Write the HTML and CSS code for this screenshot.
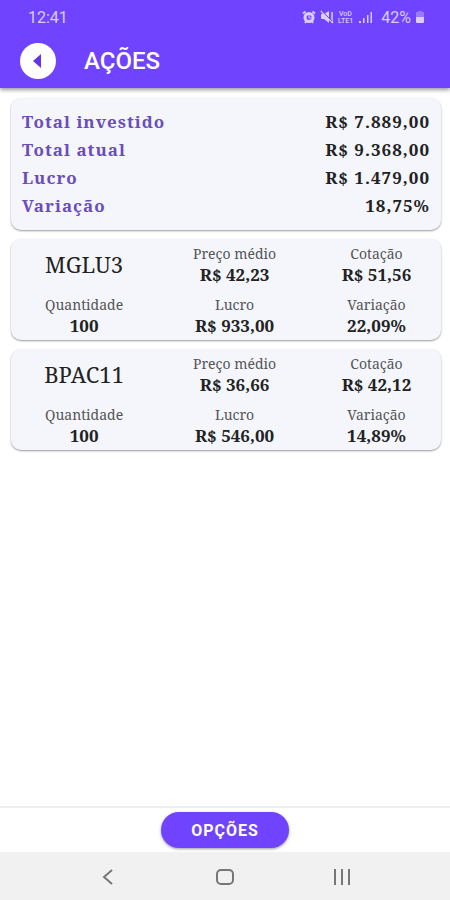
FILE: index.html
```html
<!DOCTYPE html>
<html lang="pt-BR">
<head>
  <meta charset="UTF-8" />
  <meta name="viewport" content="width=device-width, initial-scale=1" />
  <title>Ações</title>
  <link rel="stylesheet" href="styles.css">
</head>
<body>
  <header class="header">
    <div class="status-bar">
      <span>12:41</span>
      <div class="status-icons">
        <svg width="14" height="14" viewBox="0 0 14 14" fill="none" stroke="currentColor">
          <circle cx="7" cy="7.5" r="4" stroke-width="3" />
          <path d="M1 3.5 3.5 1.5M13 3.5 10.500 1.500M3 13l1.500-2M11 13 9.500 11" stroke-width="2" />
          <path d="M7 5v3h2" />
        </svg>
        <svg width="14" height="14" viewBox="0 0 14 14">
          <path d="M1 4h3l5-3v12L4 9H1z" fill="currentColor" />
          <path d="M1 1l12 12M12 2v10" fill="none" stroke="currentColor" stroke-width="1.500" />
          <path d="M2 1l10 10" stroke="#6f43ff" />
        </svg>
        <svg class="volte" width="17" height="14" viewBox="0 0 17 14">
          <text x="1" y="6">VoD</text>
          <text x="0" y="13">LTE1</text>
        </svg>
        <svg width="14" height="14" viewBox="0 0 14 14" fill="currentColor">
          <path d="M0 11h2v2H0zM4 8h1.500v5H4zM8 5h1.500v8H8zM11.500 2H13v11h-1.500z" />
        </svg>
        <span class="battery-level">42%</span>
        <svg width="10" height="14" viewBox="0 0 10 14" fill="currentColor">
          <path d="M3 1h4v1h2v5H1V2h2z" opacity=".4" />
          <path d="M1 7h8v5q0 1-1 1H2q-1 0-1-1z" />
        </svg>
      </div>
    </div>
    <div class="toolbar">
      <button class="back" aria-label="Voltar">
        <svg width="36" height="36" viewBox="0 0 36 36"><path d="M21 11v14l-8-7z" fill="#6236e0" /></svg>
      </button>
      <h1>AÇÕES</h1>
    </div>
  </header>

  <main class="content">
    <dl class="card summary">
      <div><dt>Total investido</dt><dd>R$ 7.889,00</dd></div>
      <div><dt>Total atual</dt><dd>R$ 9.368,00</dd></div>
      <div><dt>Lucro</dt><dd>R$ 1.479,00</dd></div>
      <div><dt>Variação</dt><dd>18,75%</dd></div>
    </dl>

    <section class="card stock">
      <h2>MGLU3</h2>
      <div><span>Preço médio</span><strong>R$ 42,23</strong></div>
      <div><span>Cotação</span><strong>R$ 51,56</strong></div>
      <div><span>Quantidade</span><strong>100</strong></div>
      <div><span>Lucro</span><strong>R$ 933,00</strong></div>
      <div><span>Variação</span><strong>22,09%</strong></div>
    </section>

    <section class="card stock">
      <h2>BPAC11</h2>
      <div><span>Preço médio</span><strong>R$ 36,66</strong></div>
      <div><span>Cotação</span><strong>R$ 42,12</strong></div>
      <div><span>Quantidade</span><strong>100</strong></div>
      <div><span>Lucro</span><strong>R$ 546,00</strong></div>
      <div><span>Variação</span><strong>14,89%</strong></div>
    </section>
  </main>

  <footer class="actions">
    <button class="options">OPÇÕES</button>
  </footer>

  <nav class="system-nav">
    <button aria-label="Voltar">
      <svg width="20" height="20" viewBox="0 0 20 20"><path d="M14 3 6 10l8 7" /></svg>
    </button>
    <button aria-label="Início">
      <svg width="20" height="20" viewBox="0 0 20 20"><rect x="2" y="3" width="16" height="14" rx="4" /></svg>
    </button>
    <button aria-label="Recentes">
      <svg width="20" height="20" viewBox="0 0 20 20"><path d="M3 2v16M10 2v16M17 2v16" /></svg>
    </button>
  </nav>
</body>
</html>
```

FILE: styles.css
```css
:root {
  --accent: #6f43ff;
  --card: #f4f6fb;
}
* {
  box-sizing: border-box;
}
body {
  margin: 0;
  min-height: 100vh;
  display: flex;
  flex-direction: column;
  background: #fff;
  color: #222;
  font-family: "Noto Serif", "DejaVu Serif", serif;
}
button {
  border: none;
  padding: 0;
  cursor: pointer;
}
svg {
  display: block;
}

.header {
  background: var(--accent);
  color: #fff;
  font-family: Roboto, sans-serif;
  box-shadow: 0 2px 4px rgba(0,0,0,0.4);
}
.status-bar {
  display: flex;
  justify-content: space-between;
  align-items: center;
  height: 34px;
  padding: 0 25px 0 28px;
  color: #d9ceff;
  font-size: 16px;
}
.status-icons {
  display: flex;
  align-items: center;
  gap: 4px;
}
.volte {
  fill: currentColor;
  font-size: 7px;
  font-weight: 500;
}
.battery-level {
  margin-left: 4px;
}
.toolbar {
  display: flex;
  align-items: center;
  gap: 28px;
  height: 54px;
  padding: 0 20px;
}
.back {
  width: 36px;
  height: 36px;
  border-radius: 50%;
  background: #fff;
}
h1 {
  margin: 0;
  font-size: 24px;
  font-weight: 500;
}

.content {
  flex: 1;
  display: flex;
  flex-direction: column;
  gap: 9px;
  padding: 10px 9px 10px 11px;
}
.card {
  margin: 0;
  border-radius: 10px;
  background: var(--card);
  box-shadow: 0 1px 2px rgba(0,0,0,0.4);
}
.summary {
  padding: 10px 11px;
  font-size: 17px;
  font-weight: bold;
  line-height: 28px;
  letter-spacing: 1px;
}
.summary div {
  display: flex;
  justify-content: space-between;
}
.summary dt {
  color: #6a4dbb;
}
.summary dd {
  margin: 0;
}

.stock {
  display: grid;
  grid-template-columns: 34% 36% 30%;
  row-gap: 9px;
  align-items: start;
  padding: 5px 0 3px;
  text-align: center;
}
.stock h2 {
  margin: 0;
  font-size: 22px;
  font-weight: normal;
  line-height: 40px;
}
.stock span {
  display: block;
  font-size: 14px;
  line-height: 20px;
  color: #555;
}
.stock strong {
  display: block;
  font-size: 17px;
  line-height: 22px;
}

.actions {
  display: flex;
  justify-content: center;
  padding: 4px 0;
  border-top: 2px solid #eee;
}
.options {
  width: 128px;
  height: 36px;
  border-radius: 18px;
  background: var(--accent);
  color: #fff;
  font: bold 16px Roboto, sans-serif;
  letter-spacing: 1px;
  box-shadow: 0 1px 3px rgba(0,0,0,0.4);
}

.system-nav {
  display: flex;
  justify-content: center;
  gap: 97px;
  padding: 15px 0 13px;
  background: #f1f1f1;
}
.system-nav button {
  background: none;
}
.system-nav svg {
  fill: none;
  stroke: #777;
  stroke-width: 2;
}
```
